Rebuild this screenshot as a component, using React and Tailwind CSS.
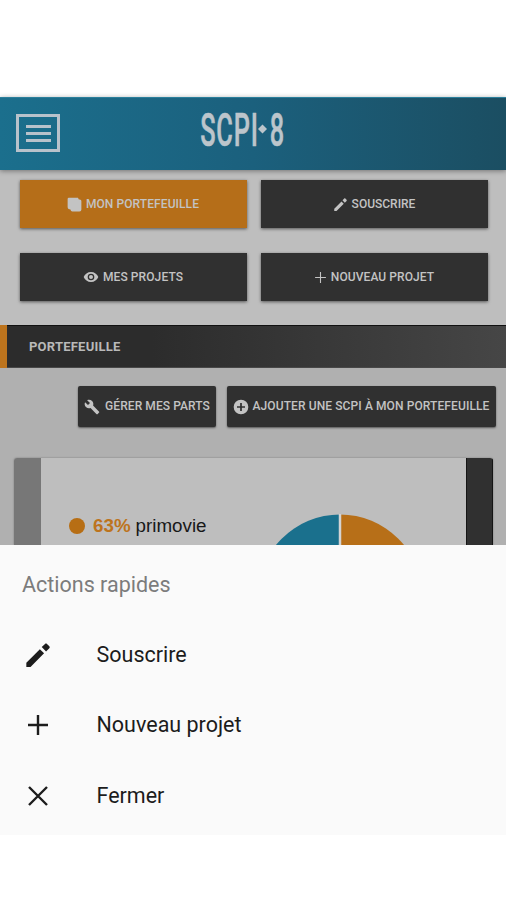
import React from "react";

const paths = {
  pencil: "M2 22.2v-3.6L13.6 7l3.6 3.6L5.6 22.2zM15.2 5.2l2.8-2.7c.5-.5 1.200-.5 1.700 0l2 2c.5.5.5 1.200 0 1.700l-2.800 2.800z",
  eye: "M12 4.5C7 4.5 2.73 7.61 1 12c1.73 4.39 6 7.5 11 7.5s9.27-3.11 11-7.5c-1.73-4.39-6-7.5-11-7.5zM12 17a5 5 0 1 1 0-10 5 5 0 0 1 0 10zm0-8a3 3 0 1 0 0 6 3 3 0 0 0 0-6z",
  wrench: "M22.7 19l-9.1-9.1c.9-2.3.4-5-1.5-6.9-2-2-5-2.4-7.4-1.3L9 6 6 9 1.6 4.7C.4 7.1.9 10.1 2.9 12.1c1.9 1.9 4.6 2.4 6.9 1.5l9.1 9.1c.4.4 1 .4 1.4 0l2.3-2.3c.5-.4.5-1.1.1-1.4z",
  addCircle: "M12 1a11 11 0 1 0 0 22 11 11 0 0 0 0-22zm6 12.3h-4.7V18h-2.6v-4.7H6v-2.6h4.7V6h2.6v4.7H18v2.6z",
  albums: "M3 1h14.5L19 4h1.5Q23 4 23 6.500V20q0 3-3 3H8.500q-2.500 0-3-3L2.500 19Q1 18.500 1 16V3Q1 1 3 1z",
};

function Icon({ name, className }) {
  return (
    <svg viewBox="0 0 24 24" className={className} fill="currentColor">
      <path d={paths[name]} />
    </svg>
  );
}

function Stroke({ d, className, width = 2 }) {
  return (
    <svg viewBox="0 0 24 24" className={className} fill="none" stroke="currentColor" strokeWidth={width}>
      <path d={d} />
    </svg>
  );
}

const PLUS = "M12 2v20M2 12h20";
const CROSS = "M3 3l18 18M21 3L3 21";

function TopButton({ color, label, icon, spacing = "" }) {
  return (
    <div className={"flex h-12 items-center justify-center gap-1 pr-px text-[#c3c3c3] shadow-[0_1px_3px_rgba(0,0,0,0.55)] " + color}>
      {icon}
      <span className={"text-[12px] font-medium leading-4 whitespace-nowrap " + spacing}>{label}</span>
    </div>
  );
}

function Action({ icon, label }) {
  return (
    <div className="flex h-[70.3px] items-center text-[#1c1c1c]">
      <div className="flex w-[75px] items-center justify-center">{icon}</div>
      <span className="pl-[21.5px] text-[21.5px] leading-7">{label}</span>
    </div>
  );
}

export default function App() {
  return (
    <div className="flex h-[900px] w-[506px] flex-col overflow-hidden bg-white pt-[97px] font-['Roboto',sans-serif]">
      <header className="z-10 flex h-[73px] shrink-0 items-start border-t border-[#2b7f9b] bg-linear-to-r from-[#1b6f8d] via-[#1b607d] to-[#1b4e62] shadow-[0_1px_5px_rgba(0,0,0,0.4)]">
        <div className="mt-4 ml-4 flex h-[38px] w-11 flex-col items-center justify-center gap-1 border-[3px] border-[#b8c2cb]">
          <div className="h-[3px] w-[25px] bg-[#b8c2cb]" />
          <div className="h-[3px] w-[25px] bg-[#b8c2cb]" />
          <div className="h-[3px] w-[25px] bg-[#b8c2cb]" />
        </div>
        <svg className="mt-[4px] ml-[139px] h-[62px] w-[92px] overflow-visible" viewBox="0 0 92 62" fill="#bcc5cb" stroke="#bcc5cb" strokeWidth="0.6">
          <text x="0" y="0" letterSpacing="1.5" transform="translate(1.2 44) scale(0.55 1)" fontSize="46" fontWeight="500">SCPI</text>
          <path d="M63.5 22.5l4.500 4.500-4.500 4.500-4.500-4.500z" stroke="none" />
          <text x="0" y="0" transform="translate(70.8 44) scale(0.55 1)" fontSize="46" fontWeight="500">8</text>
        </svg>
      </header>

      <section className="grid h-[155px] shrink-0 grid-cols-2 content-start gap-x-[14px] gap-y-[25px] bg-[#bebebe] pt-[10px] pr-[18px] pl-5">
        <TopButton color="bg-[#b56e19]" label="MON PORTEFEUILLE" spacing="tracking-[0.08px]" icon={<Icon name="albums" className="size-[15px]" />} />
        <TopButton color="bg-[#303030]" label="SOUSCRIRE" icon={<Icon name="pencil" className="size-[15px]" />} />
        <TopButton color="bg-[#303030]" label="MES PROJETS" spacing="tracking-[0.1px]" icon={<Icon name="eye" className="size-4" />} />
        <TopButton color="bg-[#303030]" label="NOUVEAU PROJET" spacing="tracking-[0.08px]" icon={<Stroke d={PLUS} className="size-[13px]" />} />
      </section>

      <div className="flex h-[43px] shrink-0 items-center border-y border-t-[#111] border-b-[#484848] bg-linear-to-r from-[#2c2c2c] from-30% to-[#464646]">
        <div className="-my-px h-[43px] w-[7px] bg-[#bd741d]" />
        <span className="pl-[22px] text-[13px] font-bold leading-4 tracking-[0.22px] text-[#b9b9b9]">PORTEFEUILLE</span>
      </div>

      <section className="flex h-[177px] shrink-0 flex-col overflow-hidden bg-[#b0b0b0] pt-[18px]">
        <div className="flex justify-end gap-[11px] pr-[10px] text-[12px] font-medium text-[#c3c3c3]">
          <div className="flex h-[41px] w-[138px] items-center justify-center gap-[5px] rounded-[2px] bg-[#303030] shadow-[0_1px_2px_rgba(0,0,0,0.5)]">
            <Icon name="wrench" className="size-4 shrink-0" />
            <span className="-mt-[2px] whitespace-nowrap tracking-[0.08px]">GÉRER MES PARTS</span>
          </div>
          <div className="flex h-[41px] w-[269px] items-center justify-center gap-1 rounded-[2px] bg-[#303030] pr-px shadow-[0_1px_2px_rgba(0,0,0,0.5)]">
            <Icon name="addCircle" className="size-4 shrink-0" />
            <span className="-mt-[2px] whitespace-nowrap tracking-[0.1px]">AJOUTER UNE SCPI À MON PORTEFEUILLE</span>
          </div>
        </div>
        <div className="mt-[31px] mr-[13px] ml-[14px] flex h-[87px] overflow-hidden rounded-t-[3px] bg-[#bebebe] shadow-[0_0_2px_rgba(0,0,0,0.35)]">
          <div className="w-[27px] shrink-0 bg-[#777]" />
          <div className="flex flex-1 items-start">
            <div className="mt-[54px] ml-7 flex items-center font-['Liberation_Sans',sans-serif] text-[18.8px] leading-7">
              <div className="size-4 rounded-full bg-[#b76e14]" />
              <span className="ml-2 font-bold text-[#bd741d]">63%</span>
              <span className="ml-[5px] text-[#181818]">primovie</span>
            </div>
            <svg className="mt-[56px] ml-auto mr-[43px] h-[31px] w-[166px] shrink-0" viewBox="0 0 166 31">
              <path d="M83 .5A82.5 82.5 0 0 0 .5 83H83z" fill="#1a708d" />
              <path d="M83 .5A82.5 82.5 0 0 1 165.5 83H83z" fill="#b76f18" />
              <path d="M83 0v31" stroke="#d4d4d4" strokeWidth="2.5" />
            </svg>
          </div>
          <div className="w-[27px] shrink-0 border-x border-[#151515] bg-[#303030]" />
        </div>
      </section>

      <section className="h-[290px] shrink-0 bg-[#fafafa]">
        <h2 className="h-[75px] pt-[25.5px] pl-[22px] text-[21.5px] font-normal leading-7 text-[#7c7c7c]">Actions rapides</h2>
        <Action icon={<Icon name="pencil" className="size-7" />} label="Souscrire" />
        <Action icon={<Stroke d={PLUS} className="size-6" width={2.4} />} label="Nouveau projet" />
        <Action icon={<Stroke d={CROSS} className="size-6" width={2.4} />} label="Fermer" />
      </section>
    </div>
  );
}
